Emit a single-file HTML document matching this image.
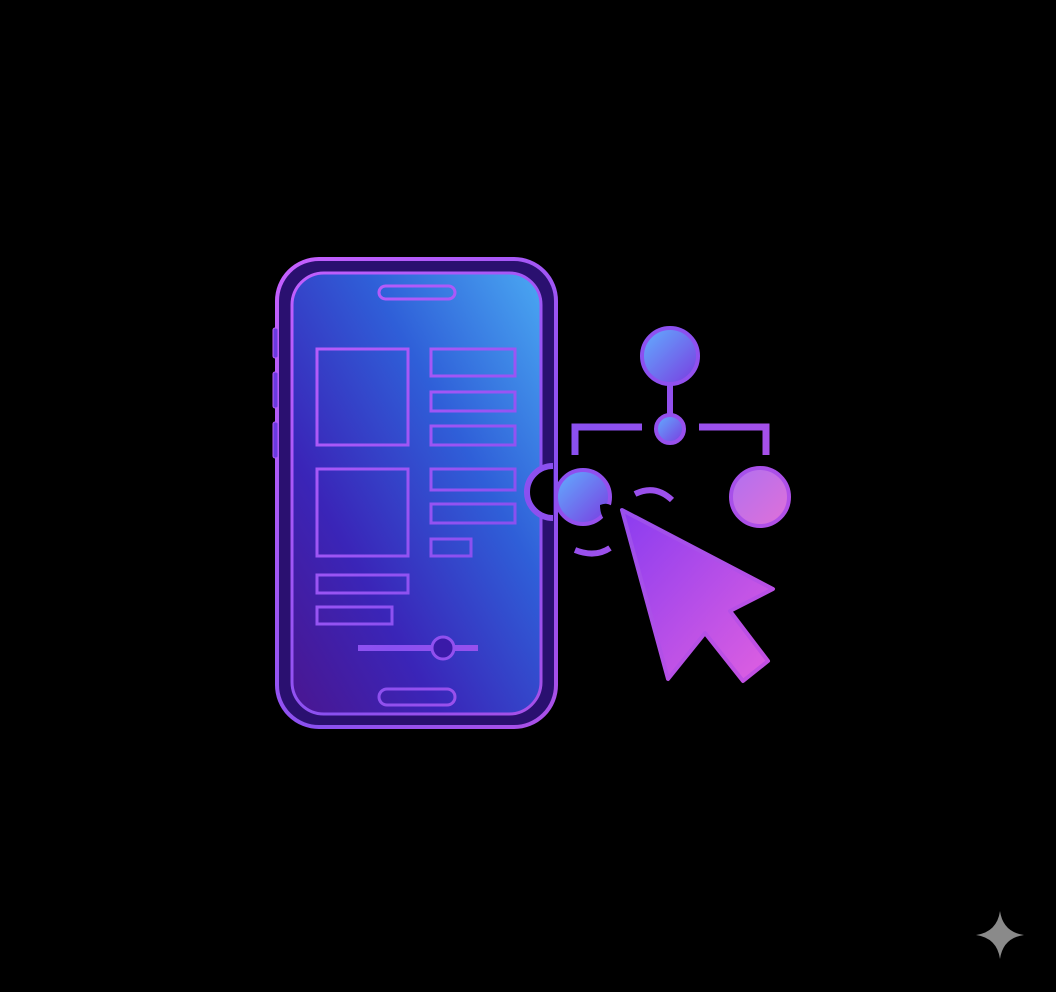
<!DOCTYPE html>
<html><head><style>html,body{margin:0;padding:0;background:#000;width:1056px;height:992px;overflow:hidden}</style></head>
<body>
<svg width="1056" height="992" viewBox="0 0 1056 992" xmlns="http://www.w3.org/2000/svg">
<defs>
<linearGradient id="scr" x1="1" y1="0" x2="0" y2="1">
<stop offset="0" stop-color="#4aa8f2"/><stop offset="0.35" stop-color="#2f5fd8"/><stop offset="0.7" stop-color="#3a25b8"/><stop offset="1" stop-color="#4a1690"/></linearGradient>
<linearGradient id="rim" gradientUnits="userSpaceOnUse" x1="270" y1="250" x2="800" y2="730">
<stop offset="0" stop-color="#c860ff"/><stop offset="0.5" stop-color="#8a50f0"/><stop offset="1" stop-color="#d050e0"/></linearGradient>
<linearGradient id="cur" x1="0" y1="0" x2="1" y2="1">
<stop offset="0" stop-color="#8a3cf0"/><stop offset="1" stop-color="#e060e0"/></linearGradient>
<linearGradient id="ball" x1="0" y1="0" x2="1" y2="1">
<stop offset="0" stop-color="#60b0ff"/><stop offset="1" stop-color="#7a3ae0"/></linearGradient>
<linearGradient id="ball2" x1="0" y1="0" x2="1" y2="1">
<stop offset="0" stop-color="#b070f0"/><stop offset="1" stop-color="#e070d8"/></linearGradient>
</defs>
<g stroke="url(#rim)" fill="none" stroke-width="3">
<rect x="277" y="259" width="279" height="468" rx="42" fill="#2a1070" stroke-width="4"/>
<rect x="292" y="273" width="249" height="441" rx="32" fill="url(#scr)"/>
<rect x="273" y="328" width="5" height="30" rx="2" fill="#6a3ae0" stroke-width="1"/>
<rect x="273" y="372" width="5" height="36" rx="2" fill="#6a3ae0" stroke-width="1"/>
<rect x="273" y="422" width="5" height="36" rx="2" fill="#6a3ae0" stroke-width="1"/>
<rect x="379" y="286" width="76" height="13" rx="6.5"/>
<rect x="317" y="349" width="91" height="96"/>
<rect x="317" y="469" width="91" height="87"/>
<rect x="431" y="349" width="84" height="27"/>
<rect x="431" y="392" width="84" height="19"/>
<rect x="431" y="426" width="84" height="19"/>
<rect x="431" y="469" width="84" height="21"/>
<rect x="431" y="504" width="84" height="19"/>
<rect x="431" y="539" width="40" height="17"/>
<rect x="317" y="575" width="91" height="18"/>
<rect x="317" y="607" width="75" height="17"/>
<line x1="358" y1="648" x2="478" y2="648" stroke-width="6"/>
<circle cx="443" cy="648" r="11" fill="#3a1aa8"/>
<rect x="379" y="689" width="76" height="16" rx="8"/>
</g>
<path d="M553 466 A26 26 0 0 0 553 518" stroke="url(#rim)" stroke-width="6" fill="#000"/>
<g stroke="url(#rim)" stroke-width="4">
<circle cx="670" cy="356" r="28" fill="url(#ball)"/>
<line x1="670" y1="384" x2="670" y2="414" stroke-width="6"/>
<circle cx="670" cy="429" r="14" fill="url(#ball)"/>
<path d="M642 427 H575 V455" fill="none" stroke-width="7"/>
<path d="M699 427 H766 V455" fill="none" stroke-width="7"/>
<circle cx="583" cy="497" r="27" fill="url(#ball)"/>
<circle cx="760" cy="497" r="29" fill="url(#ball2)"/>
<path d="M635 494 Q655 484 672 500" fill="none" stroke-width="6"/>
<path d="M575 550 Q595 558 610 548" fill="none" stroke-width="6"/>
</g>
<path d="M600 505 Q612 500 618 515 L612 525 Q600 520 600 505Z" fill="#000"/>
<polygon points="622,510 773,589 730,611 768,661 743,681 705,633 668,679" fill="url(#cur)" stroke="url(#rim)" stroke-width="4" stroke-linejoin="round"/>
<path d="M1000 911 Q1003 932 1024 935 Q1003 938 1000 959 Q997 938 976 935 Q997 932 1000 911Z" fill="#8a8a8a"/>
</svg>
</body></html>
